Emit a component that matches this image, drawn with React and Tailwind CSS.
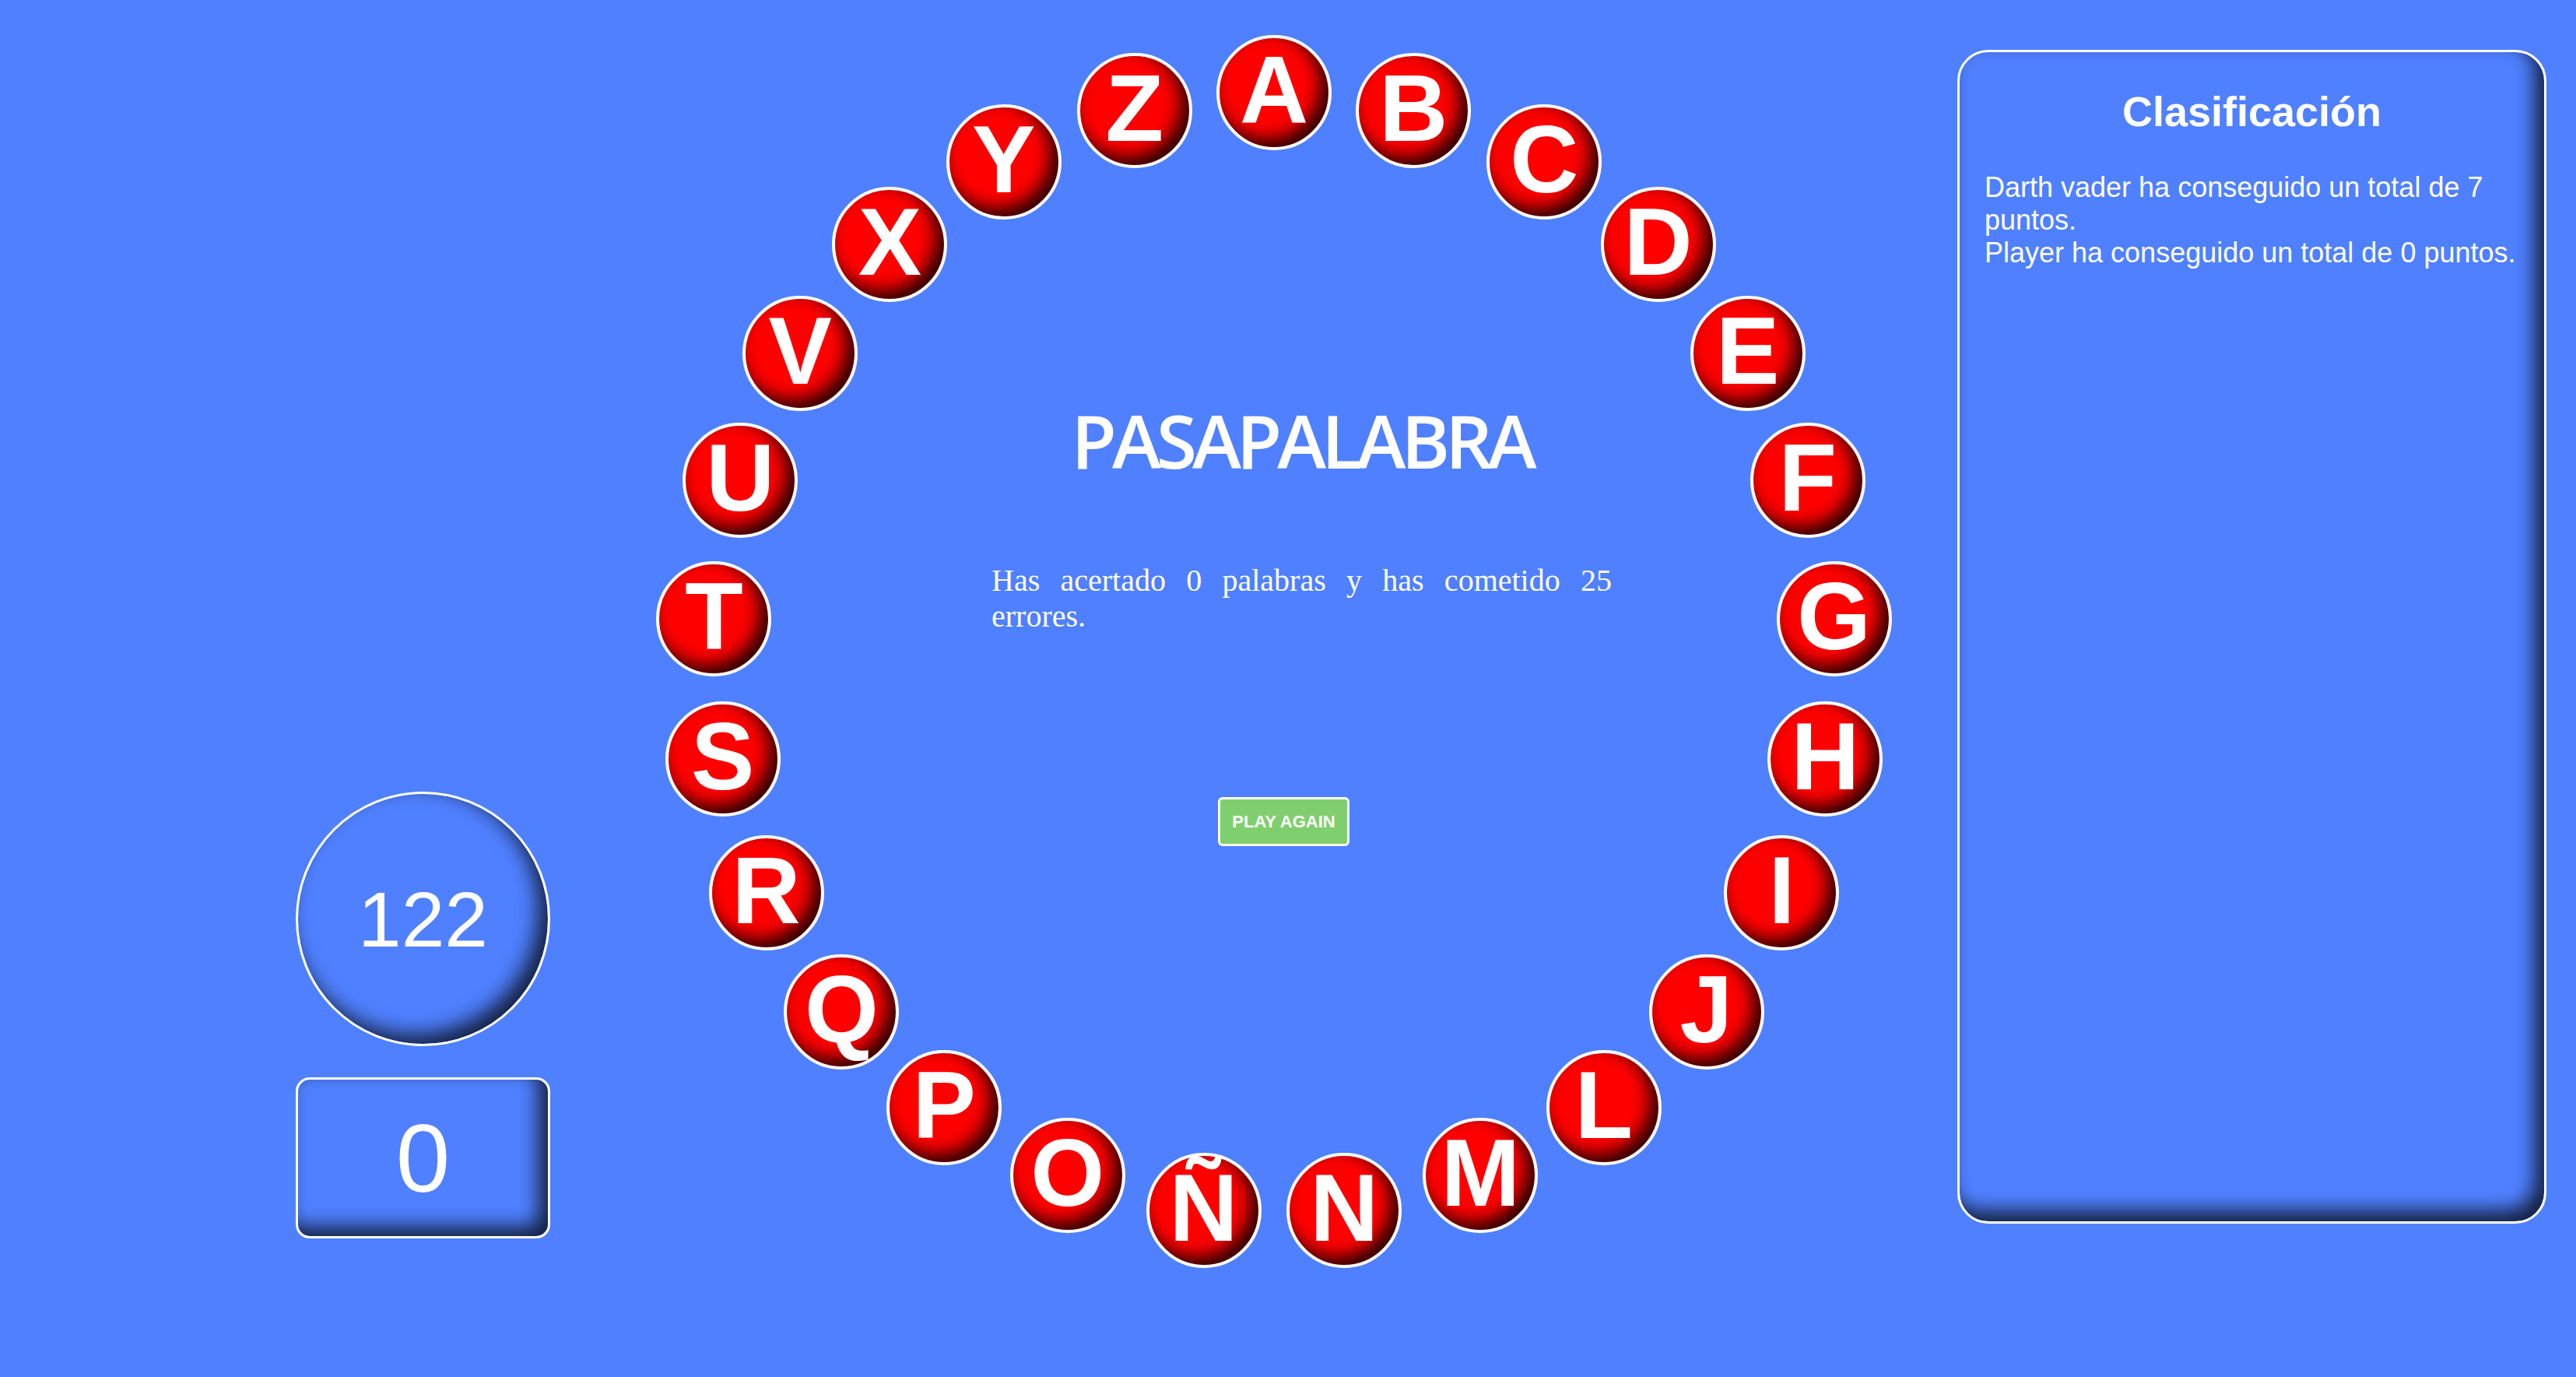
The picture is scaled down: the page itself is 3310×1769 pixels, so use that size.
import React from "react";

const LETTERS = ["A", "B", "C", "D", "E", "F", "G", "H", "I", "J", "L", "M", "N", "Ñ", "O", "P", "Q", "R", "S", "T", "U", "V", "X", "Y", "Z"];

const RADIUS = 721;
const SIZE = 148;
const HALF = 795;

const sans = { fontFamily: '"Liberation Sans", Arial, Helvetica, sans-serif' };

function Letter({ letter, index }) {
  const angle = (index / LETTERS.length) * Math.PI * 2;
  const left = HALF + RADIUS * Math.sin(angle) - SIZE / 2;
  const top = HALF - RADIUS * Math.cos(angle) - SIZE / 2;
  return (
    <div
      className="absolute w-[148px] h-[148px] rounded-full border-4 border-white bg-[#ff0000] shadow-[inset_-10px_-10px_22px_rgba(0,0,0,0.85)] flex items-center justify-center pb-[6px] text-white font-bold text-[122px] leading-none"
      style={{ left, top, ...sans }}
    >
      {letter}
    </div>
  );
}

export default function App() {
  return (
    <div className="w-full h-[1769px] bg-[#4f80ff] flex overflow-hidden" style={sans}>
      {/* timer + score */}
      <div className="w-[707px] shrink-0 pl-[380px] pb-[178px] flex flex-col justify-end gap-[40px]">
        <div className="w-[327px] h-[327px] rounded-full border-[3px] border-white shadow-[inset_-12px_-12px_26px_rgba(0,0,0,0.75)] flex items-center justify-center text-white text-[100px] leading-none">
          122
        </div>
        <div className="w-[327px] h-[207px] rounded-[18px] border-[3px] border-white shadow-[inset_-12px_-12px_24px_rgba(0,0,0,0.75)] flex items-center justify-center text-white text-[125px] leading-none">
          0
        </div>
      </div>

      {/* rosco */}
      <div className="relative ml-[135px] mt-[45px] w-[1590px] h-[1590px] shrink-0">
        {LETTERS.map((l, i) => (
          <Letter key={l} letter={l} index={i} />
        ))}
        <div className="pl-[432px] pt-[473px] w-[1229px]">
          <h1
            className="text-white text-[95px] font-semibold leading-none text-center tracking-[-6px] whitespace-nowrap"
            style={{ fontFamily: '"Open Sans", sans-serif' }}
          >
            PASAPALABRA
          </h1>
          <p
            className="mt-[110px] text-white text-[40px] leading-[46px] text-justify"
            style={{ fontFamily: '"Liberation Serif", "Times New Roman", serif' }}
          >
            Has acertado 0 palabras y has cometido 25 errores.
          </p>
          <button className="mt-[209px] ml-[291px] w-[169px] h-[63px] border-[3px] border-white rounded-[6px] bg-[#80cf6e] text-white font-bold text-[22px] flex items-center justify-center">
            PLAY AGAIN
          </button>
        </div>
      </div>

      {/* ranking */}
      <div className="ml-[83px] mt-[64px] w-[757px] h-[1508px] shrink-0 rounded-[40px] border-[3px] border-white shadow-[inset_-12px_-14px_24px_rgba(0,0,0,0.75)] text-white">
        <h2 className="pt-[36px] text-center font-bold text-[54px]">Clasificación</h2>
        <div className="mt-[36px] pl-[32px] pr-[20px] text-[36px] leading-[42px]">
          <p>Darth vader ha conseguido un total de 7 puntos.</p>
          <p>Player ha conseguido un total de 0 puntos.</p>
        </div>
      </div>
    </div>
  );
}
